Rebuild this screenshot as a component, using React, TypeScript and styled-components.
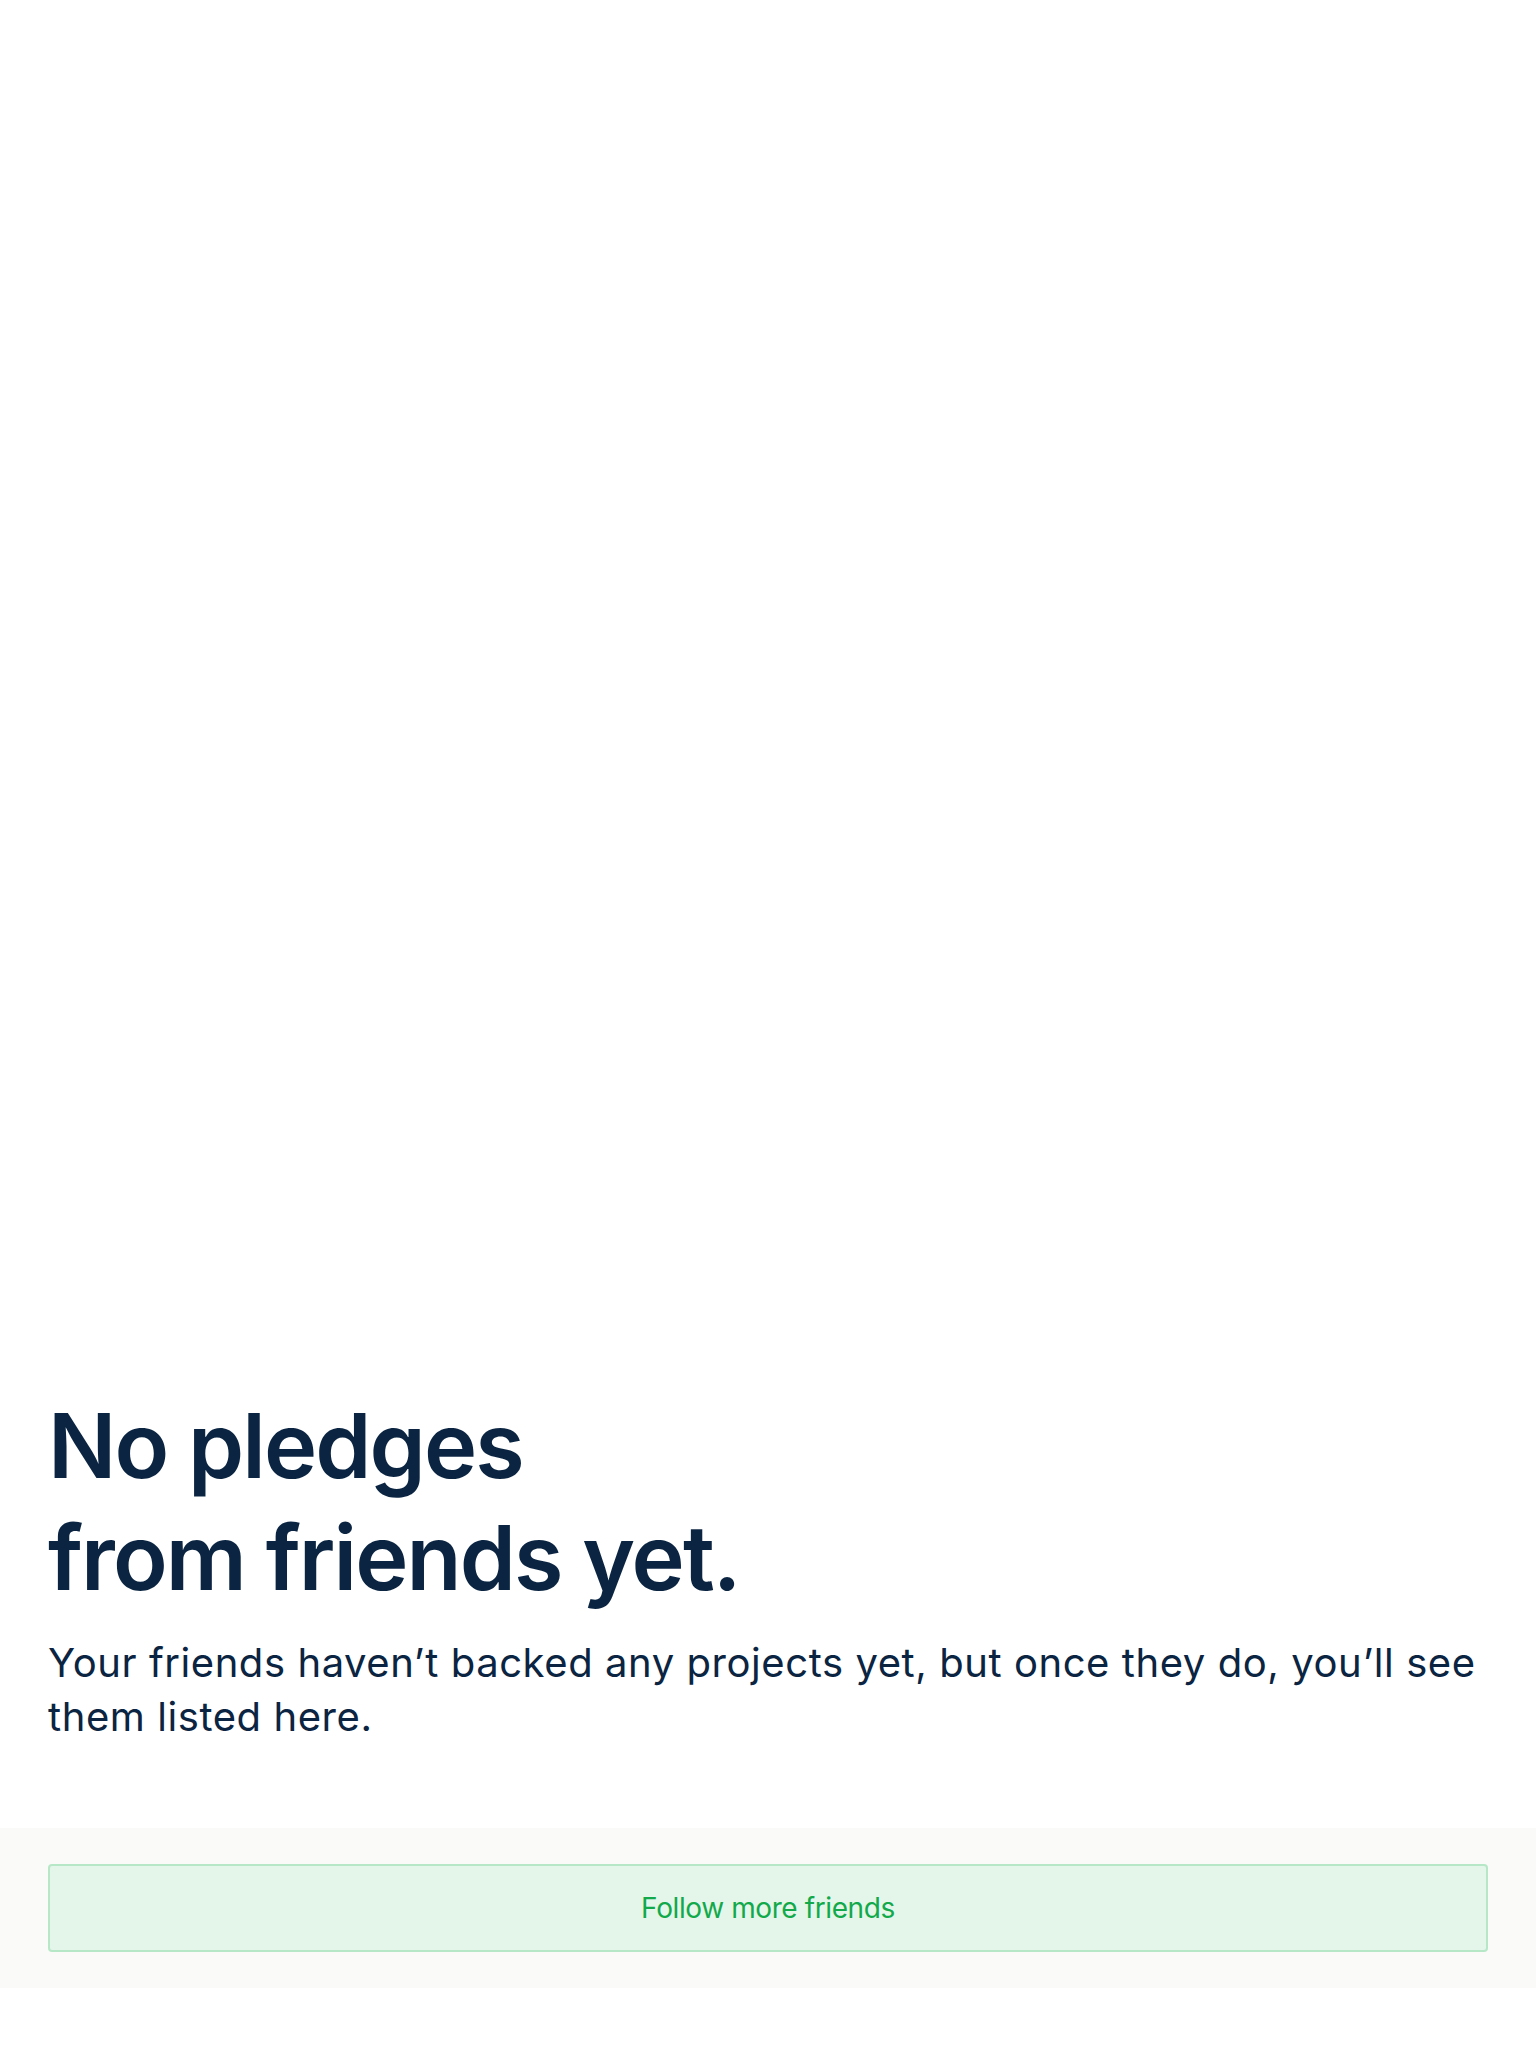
import React from "react";
import styled, { createGlobalStyle } from "styled-components";

const GlobalStyle = createGlobalStyle`
  html, body {
    margin: 0;
    padding: 0;
    background: #ffffff;
  }
  body {
    font-family: Inter, "Noto Sans", "Liberation Sans", sans-serif;
    -webkit-font-smoothing: antialiased;
  }
`;

const Page = styled.main`
  display: flex;
  flex-direction: column;
  min-height: 2048px;
  background: #ffffff;
`;

const Intro = styled.section`
  display: flex;
  flex-direction: column;
  gap: 22px;
  padding: 1390px 48px 84px;
`;

const Heading = styled.h1`
  margin: 0;
  font-size: 90px;
  line-height: 112px;
  font-weight: 600;
  letter-spacing: -1.9px;
  color: #0a2441;
`;

const Body = styled.p`
  margin: 0;
  font-size: 40px;
  line-height: 54px;
  font-weight: 400;
  letter-spacing: 0.57px;
  color: #0a2441;
  max-width: 1440px;
`;

const Footer = styled.footer`
  display: flex;
  padding: 36px 48px;
  background: #fafaf9;
`;

const FollowButton = styled.button`
  flex: 1;
  height: 88px;
  display: flex;
  align-items: center;
  justify-content: center;
  background: #e4f5ea;
  border: 2px solid #b6e7c6;
  border-radius: 4px;
  color: #12a94a;
  font-family: Inter, "Noto Sans", "Liberation Sans", sans-serif;
  font-size: 28px;
  font-weight: 400;
  letter-spacing: -0.4px;
  cursor: pointer;
`;

export default function App() {
  return (
    <>
      <GlobalStyle />
      <Page>
        <Intro>
          <Heading>
            No pledges
            <br />
            from friends yet.
          </Heading>
          <Body>
            Your friends haven’t backed any projects yet, but once they do,
            you’ll see them listed here.
          </Body>
        </Intro>
        <Footer>
          <FollowButton type="button">Follow more friends</FollowButton>
        </Footer>
      </Page>
    </>
  );
}
